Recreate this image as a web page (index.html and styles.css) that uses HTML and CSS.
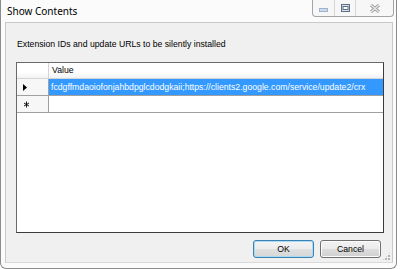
FILE: index.html
```html
<!DOCTYPE html>
<html>
    <head>
        <title>Show Contents</title>
        <link rel="stylesheet" href="styles.css">
    </head>
    <body>
        <div class="window">
            <div class="titlebar">
                <span class="title">Show Contents</span>
                <div class="controls">
                    <div class="ctl ctl-min">
                        <svg width="9" height="4" viewBox="0 0 9 4"><rect x="0.5" y="0.5" width="8" height="3" fill="#c9dcef" stroke="#9fb3c8"/></svg>
                    </div>
                    <div class="ctl ctl-max">
                        <svg width="9" height="8" viewBox="0 0 9 8"><rect x="0.5" y="0.5" width="8" height="7" fill="#dde6ef" stroke="#5a6e85"/><rect x="2" y="2.5" width="5" height="3" fill="#ffffff" stroke="#5a6e85" stroke-width="1"/></svg>
                    </div>
                    <div class="ctl ctl-close">
                        <svg width="10" height="9" viewBox="0 0 10 9"><path d="M1 1 L9 8 M9 1 L1 8" stroke="#9a9a9a" stroke-width="3"/><path d="M1 1 L9 8 M9 1 L1 8" stroke="#ececec" stroke-width="1.2"/></svg>
                    </div>
                </div>
            </div>
            <div class="client">
                <p class="label">Extension IDs and update URLs to be silently installed</p>
                <div class="grid">
                    <div class="row head">
                        <div class="rh"></div>
                        <div class="cell">Value</div>
                    </div>
                    <div class="row">
                        <div class="rh">
                            <svg width="4" height="7" viewBox="0 0 4 7"><path d="M0 0 L4 3.5 L0 7 Z" fill="#000"/></svg>
                        </div>
                        <div class="cell sel">fcdgffmdaoiofonjahbdpglcdodgkaii;https://clients2.google.com/service/update2/crx</div>
                    </div>
                    <div class="row">
                        <div class="rh">
                            <svg width="7" height="7" viewBox="0 0 7 7"><path d="M3.5 0.5 V6.5 M1 2 L6 5 M6 2 L1 5" stroke="#000" stroke-width="0.9"/></svg>
                        </div>
                        <div class="cell"></div>
                    </div>
                </div>
                <div class="buttons">
                    <button class="btn btn-default">OK</button>
                    <button class="btn">Cancel</button>
                </div>
                <div class="grip"></div>
            </div>
        </div>
    </body>
</html>
```
FILE: styles.css
```css
* {
    margin: 0;
    padding: 0;
    box-sizing: border-box;
}
body {
    background-color: #fff;
    font-family: "Liberation Sans", Arial, sans-serif;
    color: #000;
    width: 401px;
    height: 269px;
    overflow: hidden;
}
.window {
    width: 397px;
    height: 269px;
    border: 1px solid #8c8c8c;
    border-top: none;
    border-radius: 0 0 6px 6px;
    background-color: #fbfbfb;
    display: flex;
    flex-direction: column;
    padding: 0 3px 5px 4px;
}
.titlebar {
    height: 22px;
    display: flex;
    justify-content: space-between;
    align-items: flex-start;
}
.title {
    font-family: "Noto Sans", sans-serif;
    font-size: 10px;
    margin-top: 4px;
    margin-left: 2px;
    color: #000;
}
.controls {
    display: flex;
    height: 17px;
    border: 1px solid #a4a4a4;
    border-top: none;
    border-radius: 0 0 4px 4px;
    background-color: #f7f7f7;
    margin-right: -1px;
}
.ctl {
    display: flex;
    align-items: center;
    justify-content: center;
}
.ctl-min {
    width: 22px;
    border-right: 1px solid #d6d6d6;
    padding-top: 3px;
}
.ctl-max {
    width: 21px;
    border-right: 1px solid #d6d6d6;
}
.ctl-close {
    width: 37px;
}
.client {
    position: relative;
    flex: 1;
    background-color: #f0f0f0;
    border: 1px solid #c9c9c9;
    border-bottom-color: #d9d9d9;
    padding: 16px 8px 4px 10px;
    display: flex;
    flex-direction: column;
}
.label {
    font-size: 8.7px;
    line-height: 11px;
    margin-left: 1px;
    margin-bottom: 12px;
}
.grid {
    height: 171px;
    background-color: #fff;
    border: 1px solid #3c3c3c;
    border-left-color: #6a6a6a;
    border-top-color: #6a6a6a;
}
.row {
    display: flex;
    height: 17px;
    border-bottom: 1px solid #a0a0a0;
}
.row.head {
    height: 16px;
    border-bottom-color: #d5d5d5;
    background: linear-gradient(#ffffff, #ffffff 60%, #f1f2f4);
}
.rh {
    width: 32px;
    border-right: 1px solid #a0a0a0;
    background-color: #f7f7f7;
    display: flex;
    align-items: center;
    padding-left: 6px;
}
.head .rh {
    background: none;
    border-right-color: #d5d5d5;
}
.cell {
    flex: 1;
    font-size: 8.7px;
    line-height: 16px;
    padding-left: 2px;
    white-space: nowrap;
}
.head .cell {
    padding-left: 3px;
    line-height: 15px;
}
.cell.sel {
    background-color: #3399ff;
    color: #fff;
}
.buttons {
    margin-top: 7px;
    display: flex;
    justify-content: flex-end;
    gap: 6px;
    padding-right: 3px;
}
.btn {
    width: 61px;
    height: 18px;
    font-family: "Liberation Sans", Arial, sans-serif;
    font-size: 8.7px;
    color: #000;
    border: 1px solid #707070;
    border-radius: 3px;
    background: linear-gradient(#f2f2f2, #ebebeb 50%, #dddddd 51%, #cfcfcf);
    box-shadow: inset 0 0 0 1px #fcfcfc;
}
.btn-default {
    border-color: #3c7fb1;
    box-shadow: inset 0 0 0 1px #a8dcf5;
    background: linear-gradient(#f4f4f4, #ececec 50%, #e0e0e0 51%, #d6d6d6);
}
.grip {
    position: absolute;
    right: 1px;
    bottom: 1px;
    width: 9px;
    height: 9px;
    background:
        radial-gradient(circle at 1px 1px, #b4b4b4 1px, transparent 1px) 0 0 / 3px 3px;
    clip-path: polygon(100% 0, 100% 100%, 0 100%);
}
```
